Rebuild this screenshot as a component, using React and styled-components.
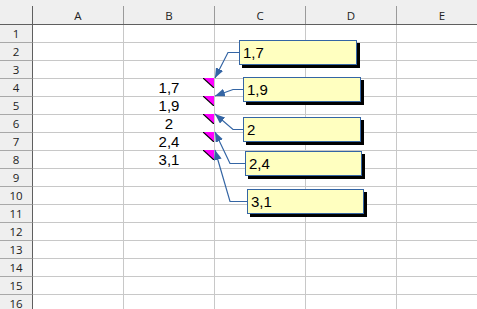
import styled, { createGlobalStyle } from "styled-components";

const columns = ["A", "B", "C", "D", "E"];
const rowCount = 16;

// column B values, keyed by row number
const values = { 4: "1,7", 5: "1,9", 6: "2", 7: "2,4", 8: "3,1" };

const notes = [
  { text: "1,7", x: 239, y: 40, w: 118, from: [239, 52.5], bend: 228, to: [215, 78] },
  { text: "1,9", x: 243, y: 77, w: 118, from: [243, 89.5], bend: 233, to: [215, 96] },
  { text: "2", x: 243, y: 117, w: 118, from: [243, 129.5], bend: 233, to: [215, 114] },
  { text: "2,4", x: 245, y: 151, w: 117, from: [245, 163.5], bend: 230, to: [215, 132] },
  { text: "3,1", x: 247, y: 189, w: 117, from: [247, 201.5], bend: 230, to: [215, 150] },
];

function App() {
  return (
    <>
      <GlobalStyle />
      <Sheet>
        <ColHead>
          <ColLabel />
        </ColHead>
        {columns.map((c) => (
          <ColHead key={c}>
            <ColLabel>{c}</ColLabel>
          </ColHead>
        ))}

        {Array.from({ length: rowCount }, (_, i) => i + 1).map((row) => (
          <Row key={row}>
            <RowHead>{row}</RowHead>
            {columns.map((c) => {
              const value = c === "B" ? values[row] : undefined;
              return (
                <Cell key={c}>
                  {value}
                  {value && (
                    <Marker width="11" height="10" viewBox="0 0 11 10">
                      <polygon points="0,0 11,0 11,10" fill="#ff00ff" />
                      <line x1="0" y1="0" x2="11" y2="10" stroke="#000" strokeWidth="1.2" />
                    </Marker>
                  )}
                </Cell>
              );
            })}
          </Row>
        ))}

        <Arrows width="488" height="320">
          <defs>
            <marker
              id="head"
              markerUnits="userSpaceOnUse"
              markerWidth="10"
              markerHeight="8"
              refX="10"
              refY="4"
              orient="auto"
            >
              <path d="M0,0 L10,4 L0,8 z" fill="#3465a4" />
            </marker>
          </defs>
          {notes.map((n) => (
            <path
              key={n.text}
              d={`M${n.from[0]} ${n.from[1]} H${n.bend} L${n.to[0]} ${n.to[1]}`}
              fill="none"
              stroke="#3465a4"
              strokeWidth="1.2"
              markerEnd="url(#head)"
            />
          ))}
        </Arrows>

        {notes.map((n) => (
          <Note key={n.text} $x={n.x} $y={n.y} $w={n.w}>
            {n.text}
          </Note>
        ))}
      </Sheet>
    </>
  );
}

const GlobalStyle = createGlobalStyle`
  body {
    margin: 0;
    background: #fff;
    overflow: hidden;
  }
`;

const Sheet = styled.div`
  position: relative;
  display: grid;
  grid-template-columns: 33px repeat(5, 91px);
  grid-template-rows: 25px repeat(16, 18px);
  width: max-content;
  font-family: "Liberation Sans", Arial, sans-serif;
`;

const Row = styled.div`
  display: contents;
`;

const ColHead = styled.div`
  background: #efefef;
  border-bottom: 1px solid #5f5f5f;
  padding-top: 6px;
  box-sizing: border-box;

  &:first-child > div {
    border-right-color: #5f5f5f;
  }
`;

const ColLabel = styled.div`
  height: 18px;
  border-right: 1px solid #9a9a9a;
  display: flex;
  align-items: center;
  justify-content: center;
  font: 11.5px "Open Sans", sans-serif;
  color: #222;
`;

const RowHead = styled.div`
  background: #efefef;
  border-right: 1px solid #5f5f5f;
  border-bottom: 1px solid #a8a8a8;
  box-sizing: border-box;
  display: flex;
  align-items: center;
  justify-content: center;
  font: 11.5px "Open Sans", sans-serif;
  color: #222;
`;

const Cell = styled.div`
  position: relative;
  border-right: 1px solid #c8c8c8;
  border-bottom: 1px solid #c8c8c8;
  box-sizing: border-box;
  text-align: center;
  font-size: 15px;
  line-height: 17px;
  color: #000;
`;

const Marker = styled.svg`
  position: absolute;
  top: -1px;
  right: 0;
  display: block;
`;

const Arrows = styled.svg`
  position: absolute;
  left: 0;
  top: 0;
  pointer-events: none;
`;

const Note = styled.div`
  position: absolute;
  left: ${(p) => p.$x}px;
  top: ${(p) => p.$y}px;
  width: ${(p) => p.$w}px;
  height: 25px;
  box-sizing: border-box;
  border: 1px solid #3465a4;
  background: #ffffc0;
  box-shadow: 3px 3px 0 #000;
  display: flex;
  align-items: center;
  padding-left: 3px;
  font-size: 15px;
  color: #000;
`;

export default App;
